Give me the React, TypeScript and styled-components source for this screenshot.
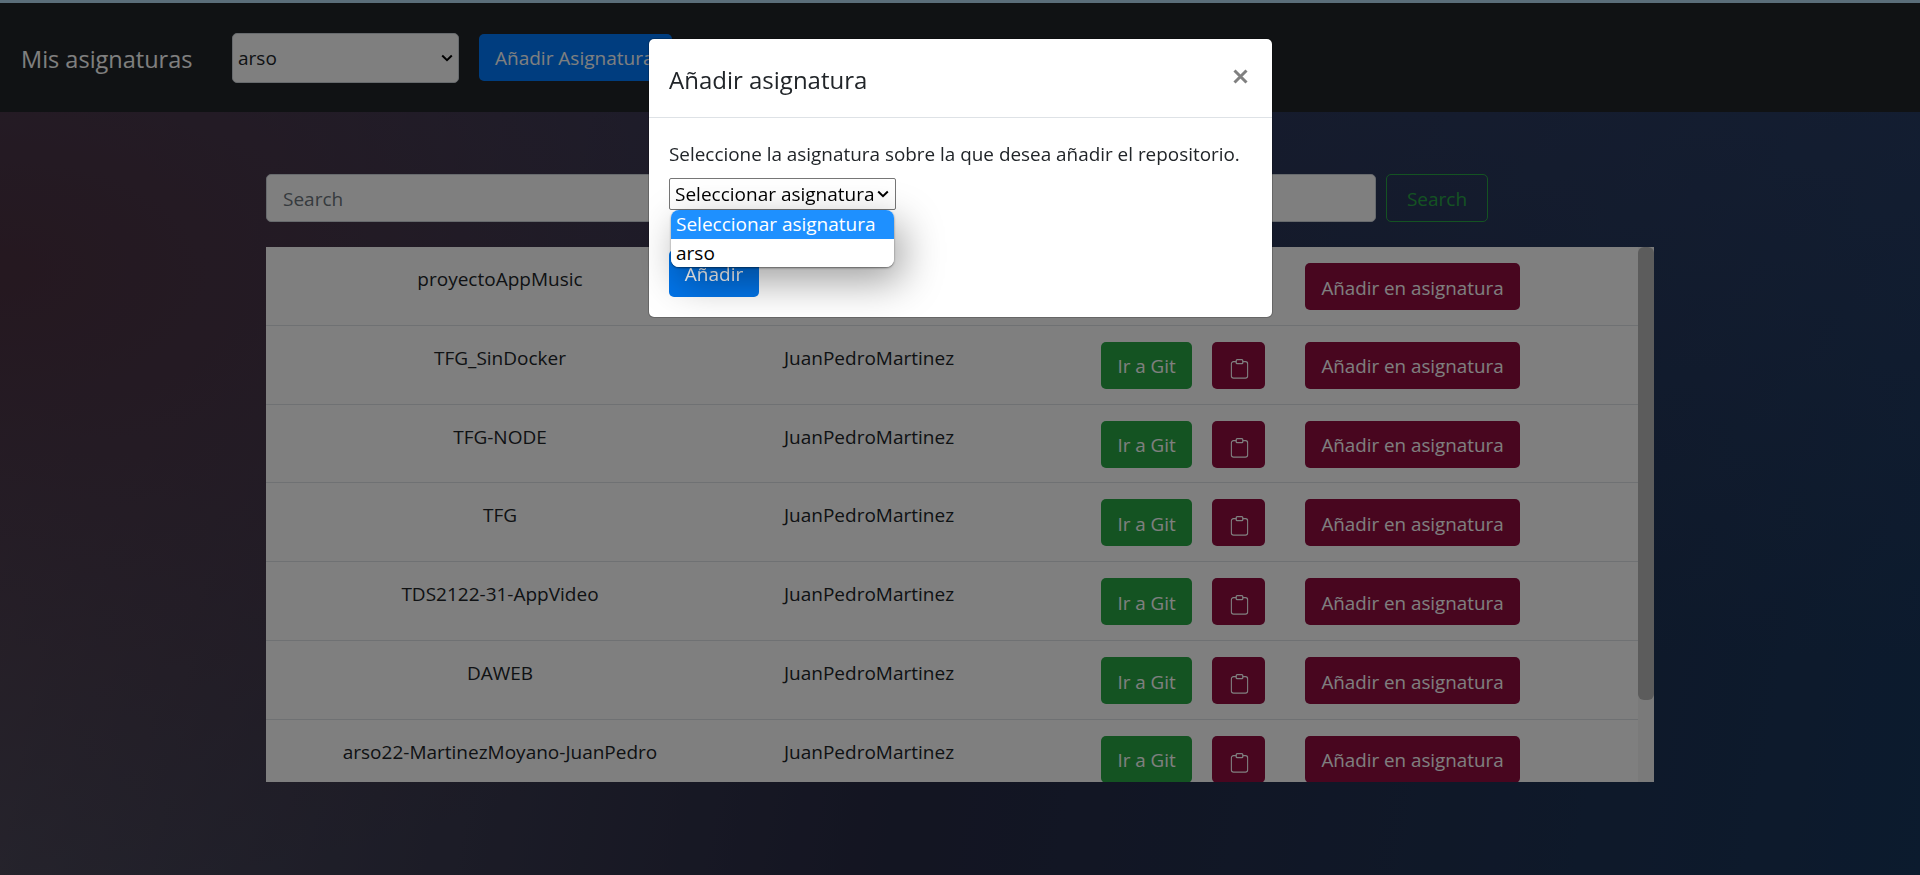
import React from "react"
import styled, { createGlobalStyle } from "styled-components"

const chevron = "url(\"data:image/svg+xml,%3Csvg xmlns='http://www.w3.org/2000/svg' width='12' height='8' viewBox='0 0 12 8'%3E%3Cpath d='M1.2 1.5 6 6.2l4.8-4.7' fill='none' stroke='%23000' stroke-width='2'/%3E%3C/svg%3E\")"

const Global = createGlobalStyle`
  html, body { margin: 0; height: 100%; overflow: hidden; }
  body { font-family: "Open Sans", "Liberation Sans", sans-serif; font-size: 19px; color: #212529; }
  * { box-sizing: border-box; }
`

const Page = styled.div`
  height: 875px;
  display: flex;
  flex-direction: column;
  background:
    radial-gradient(ellipse 1000px 620px at 0 270px, #4a3040 0%, rgba(74, 48, 64, 0) 100%),
    linear-gradient(to bottom, rgba(54, 68, 110, 0.55) 0%, rgba(54, 68, 110, 0) 75%),
    linear-gradient(100deg, #504c5c 0%, #272a44 50%, #18365c 100%);
`
const Strip = styled.div`
  height: 3px;
  background: #b6dcf4;
`
const Navbar = styled.nav`
  height: 109px;
  background: #212529;
  display: flex;
  align-items: center;
  padding-left: 21px;
`
const Brand = styled.span`
  width: 211px;
  margin-top: 2px;
  font-size: 23.5px;
  color: #fff;
`
const SubjectSelect = styled.select`
  appearance: none;
  width: 227px;
  height: 50px;
  padding-left: 5px;
  background: #fff ${chevron} no-repeat right 5px center;
  border: 1px solid #ced4da;
  border-radius: 5px;
  color: #212529;
  font: inherit;
`
const AddSubject = styled.button`
  width: 193px;
  height: 47px;
  margin-left: 20px;
  padding-left: 16px;
  background: #007bff;
  border: 0;
  border-radius: 5px;
  color: #fff;
  font: inherit;
  white-space: nowrap;
  text-align: left;
`
const Main = styled.main`
  padding: 62px 0 0 266px;
`
const SearchForm = styled.form`
  display: flex;
  gap: 10px;
`
const SearchInput = styled.input`
  width: 1110px;
  height: 48px;
  padding: 2px 16px 0;
  background: #fff;
  border: 1px solid #ced4da;
  border-radius: 5px;
  font: inherit;
  &::placeholder { color: #6c757d; opacity: 1; }
`
const SearchButton = styled.button`
  width: 102px;
  height: 48px;
  padding: 2px 0 0;
  background: transparent;
  border: 1px solid #28a745;
  border-radius: 5px;
  color: #28a745;
  font: inherit;
`
const ListFrame = styled.div`
  display: flex;
  width: 1388px;
  height: 535px;
  margin-top: 25px;
  background: #fff;
`
const RepoList = styled.div`
  flex: 1;
  overflow: hidden;
`
const ScrollTrack = styled.div`
  flex: none;
  width: 16px;
  background: #f5f5f5;
`
const ScrollThumb = styled.div`
  height: 453px;
  background: #b8b8b8;
  border-radius: 6px;
`
const Row = styled.div`
  display: grid;
  grid-template-columns: 468px 270px 1fr;
  height: 78.83px;
  padding-top: 16px;
  border-bottom: 1px solid #dee2e6;
`
const Cell = styled.div`
  text-align: center;
  line-height: 30px;
  padding-top: 1px;
  color: #212529;
`
const Actions = styled.div`
  display: flex;
  padding-left: 97px;
`
const RowButton = styled.button<{ $w: number; $bg: string; $ml: number }>`
  width: ${(p) => p.$w}px;
  margin-left: ${(p) => p.$ml}px;
  height: 47px;
  flex: none;
  padding: 2px 0 0;
  background: ${(p) => p.$bg};
  border: 0;
  border-radius: 5px;
  color: #fff;
  font: inherit;
  font-size: 18.8px;
  white-space: nowrap;
  svg { display: block; margin: 5px auto 0; transform: translateX(0.5px); }
`
const Backdrop = styled.div`
  position: fixed;
  inset: 0;
  display: flex;
  justify-content: center;
  align-items: flex-start;
  padding: 38px 0 0 1px;
  background: rgba(0, 0, 0, 0.5);
`
const Modal = styled.div`
  position: relative;
  width: 625px;
  height: 280px;
  background: #fff;
  background-clip: padding-box;
  border: 1px solid rgba(0, 0, 0, 0.2);
  border-radius: 6px;
`
const ModalHeader = styled.div`
  height: 79px;
  padding: 0 24px 0 20px;
  display: flex;
  justify-content: space-between;
  align-items: center;
  border-bottom: 1px solid #dee2e6;
`
const ModalTitle = styled.h5`
  margin: 2px 0 0;
  font-size: 24px;
  font-weight: 500;
  color: #212529;
`
const CloseIcon = styled.svg`
  display: block;
  width: 15px;
  height: 15px;
  margin-bottom: 3px;
  stroke: #808080;
  stroke-width: 3;
  fill: none;
`
const ModalBody = styled.div`
  padding: 21px 20px 0;
`
const ModalText = styled.p`
  margin: 0;
  font-size: 18.9px;
  line-height: 30px;
  color: #212529;
`
const ChooseSelect = styled.select`
  appearance: none;
  display: block;
  width: 227px;
  height: 32px;
  margin-top: 9px;
  padding-left: 5px;
  background: #fff ${chevron} no-repeat right 6px center;
  border: 1px solid #767676;
  border-radius: 2px;
  color: #000;
  font: inherit;
`
const SubmitButton = styled.button`
  display: block;
  width: 90px;
  height: 47px;
  margin-top: 40px;
  background: #0275ea;
  border: 0;
  border-radius: 5px;
  color: #fff;
  font: inherit;
`
const Dropdown = styled.ul`
  position: absolute;
  left: 22px;
  top: 171px;
  width: 223px;
  margin: 0;
  padding: 0;
  list-style: none;
  background: #fff;
  border-radius: 8px;
  overflow: hidden;
  box-shadow: 0 1px 2px rgba(0, 0, 0, 0.5), 8px 14px 40px rgba(0, 0, 0, 0.38);
`
const Option = styled.li<{ $active?: boolean }>`
  height: 28.5px;
  padding-left: 5px;
  line-height: 28px;
  background: ${(p) => (p.$active ? "#1e90ff" : "#fff")};
  color: ${(p) => (p.$active ? "#fff" : "#000")};
`

const ClipboardIcon = () => (
  <svg width="18" height="20" viewBox="0 0 18 20" fill="none" stroke="currentColor" strokeWidth="1.25">
    <path d="M5.7 2.7H3a2.2 2.2 0 0 0-2.2 2.2v12a2.2 2.2 0 0 0 2.2 2.2h12a2.2 2.2 0 0 0 2.2-2.2v-12a2.2 2.2 0 0 0-2.2-2.2h-2.7" />
    <rect x="5.7" y="0.7" width="6.6" height="4" rx="1" />
  </svg>
)

const repos = [
  "proyectoAppMusic",
  "TFG_SinDocker",
  "TFG-NODE",
  "TFG",
  "TDS2122-31-AppVideo",
  "DAWEB",
  "arso22-MartinezMoyano-JuanPedro",
]

export default function App() {
  return (
    <>
      <Global />
      <Page>
        <Strip />
        <Navbar>
          <Brand>Mis asignaturas</Brand>
          <SubjectSelect defaultValue="arso">
            <option>arso</option>
          </SubjectSelect>
          <AddSubject>Añadir Asignatura</AddSubject>
        </Navbar>
        <Main>
          <SearchForm>
            <SearchInput placeholder="Search" />
            <SearchButton type="button">Search</SearchButton>
          </SearchForm>
          <ListFrame>
            <RepoList>
              {repos.map((name) => (
                <Row key={name}>
                  <Cell>{name}</Cell>
                  <Cell>JuanPedroMartinez</Cell>
                  <Actions>
                    <RowButton $w={91} $ml={0} $bg="#28a745">Ir a Git</RowButton>
                    <RowButton $w={53} $ml={20} $bg="#900c3f"><ClipboardIcon /></RowButton>
                    <RowButton $w={215} $ml={40} $bg="#900c3f">Añadir en asignatura</RowButton>
                  </Actions>
                </Row>
              ))}
            </RepoList>
            <ScrollTrack>
              <ScrollThumb />
            </ScrollTrack>
          </ListFrame>
        </Main>
      </Page>
      <Backdrop>
        <Modal>
          <ModalHeader>
            <ModalTitle>Añadir asignatura</ModalTitle>
            <CloseIcon viewBox="0 0 15 15">
              <path d="M1.5 1.5l12 12M13.5 1.5l-12 12" />
            </CloseIcon>
          </ModalHeader>
          <ModalBody>
            <ModalText>Seleccione la asignatura sobre la que desea añadir el repositorio.</ModalText>
            <ChooseSelect>
              <option>Seleccionar asignatura</option>
              <option>arso</option>
            </ChooseSelect>
            <SubmitButton>Añadir</SubmitButton>
          </ModalBody>
          <Dropdown>
            <Option $active>Seleccionar asignatura</Option>
            <Option>arso</Option>
          </Dropdown>
        </Modal>
      </Backdrop>
    </>
  )
}
